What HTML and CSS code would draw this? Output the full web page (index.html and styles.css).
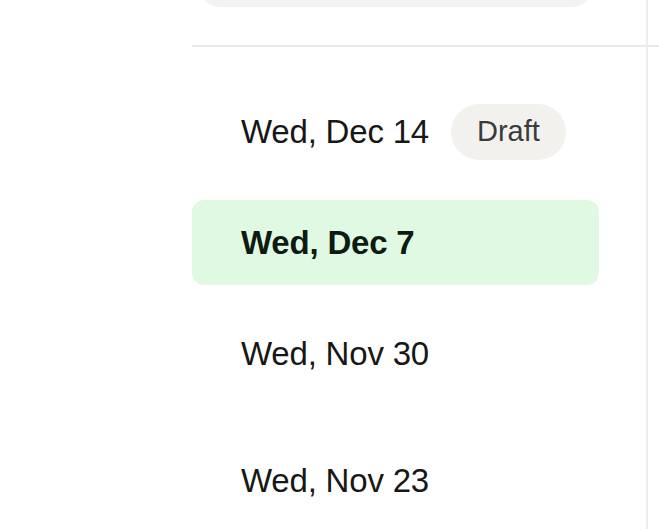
FILE: index.html
```html
<!DOCTYPE html>
<html>

<head>
    <meta charset="UTF-8">
    <meta name="viewport" content="width=device-width, initial-scale=1.0">
    <title>Issues</title>
    <link rel="stylesheet" href="styles.css">
</head>

<body>
    <div class="page">
        <div class="header-main">
            <div class="search"></div>
        </div>
        <div class="header-side"></div>

        <div class="list">
            <div class="row">
                <span class="date">Wed, Dec 14</span>
                <span class="badge">Draft</span>
            </div>
            <div class="row active">
                <span class="date">Wed, Dec 7</span>
            </div>
            <div class="row">
                <span class="date">Wed, Nov 30</span>
            </div>
            <div class="row later">
                <span class="date">Wed, Nov 23</span>
            </div>
        </div>
        <div class="side"></div>
    </div>
</body>

</html>
```

FILE: styles.css
```css
body {
    margin: 0;
    background: white;
    font-family: "Liberation Sans", Arial, sans-serif;
    color: #171717;
    overflow: hidden;
}
.page {
    margin-left: 192px;
    height: 100vh;
    display: grid;
    grid-template-columns: 456px 1fr;
    grid-template-rows: 47px 1fr;
}
.header-main,
.header-side {
    border-bottom: 2px solid #e9e9e9;
}
.header-main,
.list {
    border-right: 2px solid #ececec;
}
.search {
    height: 44px;
    width: 396px;
    margin-top: -37px;
    margin-left: 6px;
    border-radius: 22px;
    background: #f3f3f3;
}
.list {
    padding-top: 42px;
    display: flex;
    flex-direction: column;
    gap: 26px;
}
.row {
    display: flex;
    align-items: center;
    box-sizing: border-box;
    width: 407px;
    height: 85px;
    padding-left: 49px;
    border-radius: 12px;
    flex-shrink: 0;
}
.date {
    font-size: 33px;
    line-height: 40px;
    letter-spacing: -0.2px;
}
.row.active {
    background: #dff9e3;
}
.row.active .date {
    font-weight: 700;
    color: #0f1a12;
}
.row.later {
    margin-top: 16px;
}
.badge {
    display: flex;
    align-items: center;
    height: 56px;
    margin-left: 22px;
    padding: 0 26px;
    border-radius: 28px;
    background: #f2f1ee;
    color: #3b3b3b;
    font-size: 29px;
}
```
